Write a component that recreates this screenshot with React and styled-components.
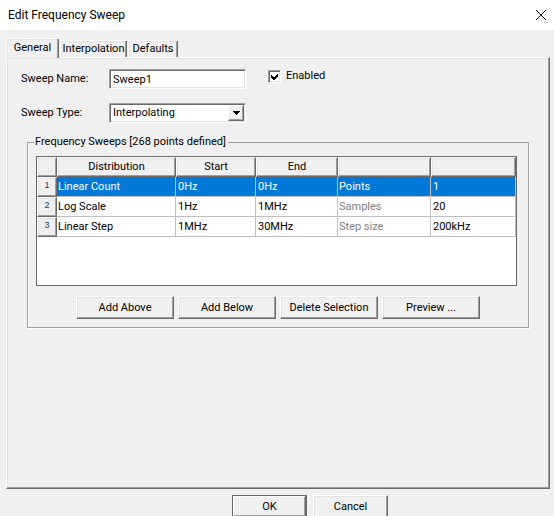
import React, { useState } from 'react'
import styled, { createGlobalStyle } from 'styled-components'

const GlobalStyle = createGlobalStyle`
* {
  box-sizing: border-box;
}

body {
  margin: 0;
  overflow: hidden;
  background-color: #f0f0f0;
  color: #000;
  font-family: Roboto, Tahoma, "Liberation Sans", sans-serif;
  font-size: 11px;
  line-height: 14px;
}

button, input, select {
  font: inherit;
  color: inherit;
}
`

const Dialog = styled.main`
display: flex;
flex-direction: column;
`

const TitleBar = styled.header`
height: 30px;
padding: 0 6px 0 8px;
display: flex;
justify-content: space-between;
align-items: center;
background-color: #fff;
`

const Title = styled.h1`
margin: 0;
font-size: 12px;
font-weight: 400;
`

const CloseButton = styled.button`
width: 14px;
height: 14px;
padding: 0;
display: flex;
justify-content: center;
align-items: center;
border: none;
background: none;
`

const Tabs = styled.div`
padding: 8px 4px 0 6px;
display: flex;
align-items: flex-end;
`

const Tab = styled.button`
width: ${({ $width }) => $width}px;
height: ${({ $active }) => ($active ? 20 : 17)}px;
margin: 0 1px ${({ $active }) => ($active ? -1 : 0)}px 0;
padding: 0 0 ${({ $active }) => ($active ? 2 : 0)}px;
position: relative;
z-index: ${({ $active }) => ($active ? 1 : 0)};
border: 1px solid;
border-color: #fff #696969 #fff #fff;
border-bottom: none;
border-radius: 2px 2px 0 0;
background-color: #f0f0f0;
box-shadow: inset -1px 0 #a0a0a0, inset 1px 1px #e3e3e3;
white-space: nowrap;
`

const Panel = styled.section`
min-height: 432px;
margin: 0 4px 0 6px;
padding: 11px 20px 0 14px;
border: 1px solid;
border-color: #fff #696969 #696969 #fff;
box-shadow: inset -1px -1px #a0a0a0, inset 1px 1px #e3e3e3;
`

const FormRow = styled.div`
height: 20px;
margin-bottom: 14px;
display: flex;
align-items: center;
`

const Label = styled.label`
width: 88px;
`

const sunken = `
border: 1px solid;
border-color: #a0a0a0 #fff #fff #a0a0a0;
box-shadow: inset 1px 1px #696969, inset -1px -1px #e3e3e3;
border-radius: 0;
background-color: #fff;
outline: none;
`

const TextInput = styled.input`
width: 137px;
height: 20px;
padding: 0 3px;
${sunken}
`

const SelectBox = styled.div`
width: 137px;
position: relative;
`

const Select = styled.select`
width: 100%;
height: 20px;
padding: 0 20px 0 3px;
appearance: none;
${sunken}
`

const SelectArrow = styled.span`
position: absolute;
top: 2px;
right: 2px;
width: 16px;
height: 16px;
display: flex;
justify-content: center;
align-items: center;
border: 1px solid;
border-color: #fff #696969 #696969 #fff;
background-color: #f0f0f0;
box-shadow: inset -1px -1px #a0a0a0;
pointer-events: none;
`

const CheckLabel = styled.label`
margin: 0 0 6px 22px;
display: flex;
align-items: center;
gap: 5px;
`

const CheckBox = styled.input`
width: 13px;
height: 13px;
margin: 0;
appearance: none;
${sunken}

&:checked {
  background: #fff url("data:image/svg+xml,%3Csvg xmlns='http://www.w3.org/2000/svg' viewBox='0 0 11 11' shape-rendering='crispEdges'%3E%3Cpath d='M2 4v3l2 2h1l4-4V2L5 6H4z'/%3E%3C/svg%3E") center / 11px 11px no-repeat;
}
`

const Group = styled.fieldset`
min-width: 0;
margin: -2px 0 0 6px;
padding: 7px 8px 8px;
border: 1px solid #a0a0a0;
box-shadow: 1px 1px #fff, inset 1px 0 #fff;
`

const Legend = styled.legend`
margin-left: -2px;
padding: 0 2px 0 1px;
`

const Grid = styled.div`
height: 130px;
margin-right: 3px;
border: 1px solid #696969;
background-color: #fff;
`

const Table = styled.table`
width: 100%;
table-layout: fixed;
border-collapse: separate;
border-spacing: 0;
`

const HeadCell = styled.th`
width: ${({ $width }) => ($width ? `${$width}px` : 'auto')};
height: 20px;
padding: 0;
border: 1px solid;
border-color: #fff #696969 #696969 #fff;
background-color: #f0f0f0;
box-shadow: inset -1px -1px #a0a0a0, inset 1px 1px #e3e3e3;
font-weight: 400;
`

const RowNumber = styled(HeadCell)`
padding-bottom: 4px;
font-family: "Liberation Sans", sans-serif;
font-size: 9px;
line-height: 10px;
`

const Row = styled.tr`
background-color: ${({ $selected }) => ($selected ? '#0078d7' : '#fff')};
color: ${({ $selected }) => ($selected ? '#fff' : '#000')};

th {
  color: #1f3a5f;
}
`

const Cell = styled.td`
height: 20px;
padding: 0 1px;
border: solid #c0c0c0;
border-width: 0 1px 1px 0;
color: ${({ $muted }) => ($muted ? '#808080' : 'inherit')};
white-space: nowrap;
`

const ValueCell = styled(Cell)`
padding-left: 2px;
`

const ButtonRow = styled.div`
margin-top: 10px;
display: flex;
justify-content: center;
gap: 4px;
`

const Button = styled.button`
width: 98px;
height: 23px;
padding: 0;
border: 1px solid;
border-color: #fff #696969 #696969 #fff;
background-color: #f0f0f0;
box-shadow: inset -1px -1px #a0a0a0, inset 1px 1px #e3e3e3;
white-space: nowrap;
`

const Footer = styled.footer`
padding: 6px 0 6px 66px;
display: flex;
justify-content: center;
gap: 6px;
`

const FooterButton = styled(Button)`
width: 75px;
`

const DefaultButton = styled(FooterButton)`
border-color: #696969;
box-shadow: inset -1px -1px #696969, inset 1px 1px #fff, inset -2px -2px #a0a0a0;
`

const columns = [
  { title: '', width: 20 },
  { title: 'Distribution', width: 119 },
  { title: 'Start', width: 80 },
  { title: 'End', width: 82 },
  { title: '', width: 93 },
  { title: '' },
]

const sweeps = [
  { distribution: 'Linear Count', start: '0Hz', end: '0Hz', kind: 'Points', value: '1' },
  { distribution: 'Log Scale', start: '1Hz', end: '1MHz', kind: 'Samples', value: '20' },
  { distribution: 'Linear Step', start: '1MHz', end: '30MHz', kind: 'Step size', value: '200kHz' },
]

const tabs = [
  { name: 'General', width: 53 },
  { name: 'Interpolation', width: 67 },
  { name: 'Defaults', width: 50 },
]

const SweepTable = () => {
  const [selected, setSelected] = useState(0)

  return (
    <Grid>
      <Table>
        <thead>
          <tr>
            {columns.map((column, i) => (
              <HeadCell key={i} $width={column.width}>{column.title}</HeadCell>
            ))}
          </tr>
        </thead>
        <tbody>
          {sweeps.map((sweep, i) => (
            <Row key={sweep.distribution} $selected={i === selected} onClick={() => setSelected(i)}>
              <RowNumber scope="row">{i + 1}</RowNumber>
              <Cell>{sweep.distribution}</Cell>
              <ValueCell>{sweep.start}</ValueCell>
              <ValueCell>{sweep.end}</ValueCell>
              <Cell $muted={i !== selected}>{sweep.kind}</Cell>
              <ValueCell>{sweep.value}</ValueCell>
            </Row>
          ))}
        </tbody>
      </Table>
    </Grid>
  )
}

const App = () => {
  return (
    <Dialog>
      <GlobalStyle />
      <TitleBar>
        <Title>Edit Frequency Sweep</Title>
        <CloseButton aria-label="Close">
          <svg width="12" height="12" viewBox="0 0 12 12" fill="none" stroke="#000">
            <path d="M1 1l10 10M11 1L1 11" />
          </svg>
        </CloseButton>
      </TitleBar>
      <Tabs role="tablist">
        {tabs.map((tab, i) => (
          <Tab key={tab.name} role="tab" aria-selected={i === 0} $active={i === 0} $width={tab.width}>
            {tab.name}
          </Tab>
        ))}
      </Tabs>
      <Panel>
        <FormRow>
          <Label htmlFor="sweep-name">Sweep Name:</Label>
          <TextInput id="sweep-name" defaultValue="Sweep1" />
          <CheckLabel>
            <CheckBox type="checkbox" defaultChecked />
            Enabled
          </CheckLabel>
        </FormRow>
        <FormRow>
          <Label htmlFor="sweep-type">Sweep Type:</Label>
          <SelectBox>
            <Select id="sweep-type" defaultValue="Interpolating">
              <option>Interpolating</option>
              <option>Discrete</option>
              <option>Fast</option>
            </Select>
            <SelectArrow>
              <svg width="7" height="4" viewBox="0 0 7 4" shapeRendering="crispEdges">
                <path d="M0 0h7v1H6v1H5v1H4v1H3V3H2V2H1V1H0z" />
              </svg>
            </SelectArrow>
          </SelectBox>
        </FormRow>
        <Group>
          <Legend>Frequency Sweeps [268 points defined]</Legend>
          <SweepTable />
          <ButtonRow>
            <Button>Add Above</Button>
            <Button>Add Below</Button>
            <Button>Delete Selection</Button>
            <Button>Preview ...</Button>
          </ButtonRow>
        </Group>
      </Panel>
      <Footer>
        <DefaultButton>OK</DefaultButton>
        <FooterButton>Cancel</FooterButton>
      </Footer>
    </Dialog>
  )
}

export default App
